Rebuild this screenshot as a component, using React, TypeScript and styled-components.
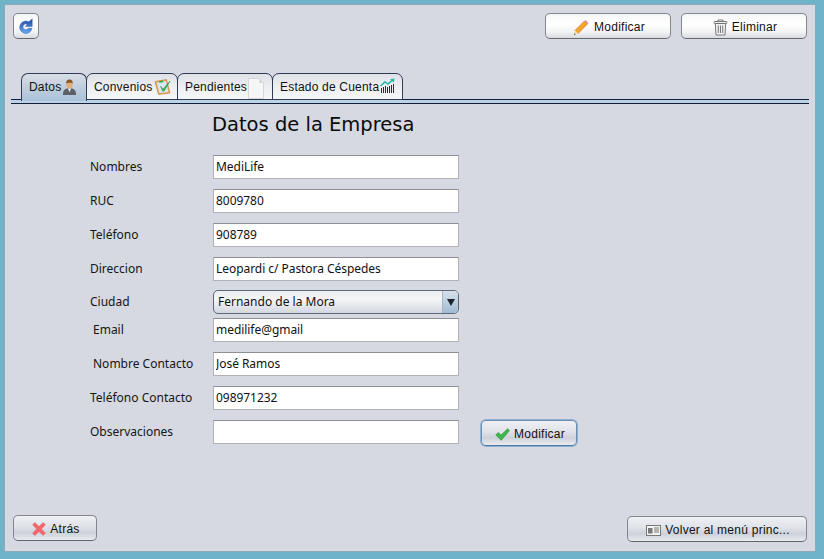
import React from "react";
import styled, { createGlobalStyle } from "styled-components";

const Global = createGlobalStyle`
  html, body { margin: 0; padding: 0; width: 824px; height: 559px; overflow: hidden; }
  * { box-sizing: border-box; }
`;

const Frame = styled.div`
  width: 824px; height: 559px; background: #6fb3c9;
  padding: 4px 8px 7px 4px;
  font-family: "Liberation Sans", Arial, sans-serif; color: #111;
`;
const Panel = styled.div`
  width: 100%; height: 100%; background: #d6d9e2; border: 1px solid #8fa9b8;
  padding: 8px 8px 10px 8px; display: flex; flex-direction: column;
`;
const Toolbar = styled.div`display: flex; align-items: flex-start; height: 26px; gap: 10px;`;
const Spacer = styled.div`flex: 1;`;
const Button = styled.button<{ $w: number; $tone?: "white" | "gray"; $focus?: boolean; $bare?: boolean }>`
  width: ${p => p.$w}px; height: 26px; padding: ${p => (p.$bare ? "0" : "2px 0 0 2px")}; flex: none;
  display: flex; align-items: center; justify-content: center; gap: 4px;
  border: 1px solid ${p => (p.$focus ? "#6f8fb0" : "#83868c")};
  border-bottom-color: ${p => (p.$focus ? "#4f79a3" : "#63666c")};
  border-radius: 5px;
  box-shadow: ${p => (p.$focus ? "0 0 0 1px #8fb2d4" : "none")};
  background: ${p => p.$tone === "gray"
    ? "linear-gradient(#eef0f4 0%, #dfe2e8 45%, #cdd1d9 70%, #e9ebef 100%)"
    : "linear-gradient(#f6f7f9 0%, #ffffff 45%, #f1f2f4 75%, #d9dbdf 100%)"};
  font-family: "Liberation Sans", Arial, sans-serif; font-size: 12px; letter-spacing: 0.25px; color: #111;
`;
const TabStrip = styled.div`
  display: flex; align-items: flex-end; height: 26px; margin: 34px 0 0 8px;
`;
const Tab = styled.div<{ $w: number; $active?: boolean }>`
  width: ${p => p.$w}px; height: ${p => (p.$active ? 28 : 27)}px; flex: none;
  margin-bottom: ${p => (p.$active ? -2 : -1)}px; margin-right: -1px;
  position: relative; z-index: ${p => (p.$active ? 2 : 1)};
  display: flex; align-items: flex-start; padding: 4px 0 0 7px; gap: 1px;
  border: 1px solid #2e3c56; border-bottom: ${p => (p.$active ? "none" : "1px solid #2e3c56")};
  border-radius: 7px 7px 0 0;
  background: ${p => p.$active
    ? "linear-gradient(#d9dfe7 0%, #c2d0de 45%, #a9c2d9 100%)"
    : "linear-gradient(#dfe1e7 0%, #eef0f3 60%, #f6f7f8 100%)"};
  font-size: 12px; letter-spacing: 0.2px; line-height: 18px; color: #111;
`;
const TabRule = styled.div`
  height: 5px; margin: 0 -2px 0 -2px; background: #bcd3e6;
  border-top: 1px solid #141f3c; border-bottom: 1px solid #141f3c;
`;
const Title = styled.h1`
  margin: 8px 0 0 199px; height: 26px; font: 400 19.5px/26px "DejaVu Sans", sans-serif; color: #0a0a0a;
`;
const Form = styled.div`display: flex; flex-direction: column; margin: 17px 0 0 0;`;
const Row = styled.div<{ $top: number }>`
  display: flex; align-items: center; height: 24px; margin-top: ${p => p.$top}px;
`;
const Label = styled.label<{ $indent?: boolean }>`
  width: 200px; flex: none; padding-left: ${p => (p.$indent ? 80 : 77)}px;
  font: 400 12px/16px "Noto Sans", sans-serif; letter-spacing: 0; color: #151515;
`;
const Field = styled.input`
  width: 246px; height: 24px; flex: none; padding: 0 2px 2px 2px; margin: 0;
  border: 1px solid #b0b2b6; border-top-color: #8d8f94; border-radius: 0; background: #fff; outline: none;
  font: 400 12px "Noto Sans", sans-serif; letter-spacing: -0.05px; color: #111;
`;
const Select = styled.div`
  width: 246px; height: 24px; flex: none; display: flex; align-items: center; justify-content: space-between;
  border: 1px solid #5d6878; border-radius: 5px; overflow: hidden;
  background: linear-gradient(#eceef2 0%, #f4f5f7 40%, #d2d7df 100%);
  font: 400 12px "Noto Sans", sans-serif; padding-left: 4px; padding-bottom: 1px; color: #111;
`;
const SelectArrow = styled.div`
  width: 16px; height: 24px; margin-bottom: -1px; display: flex; align-items: center; justify-content: center;
  background: linear-gradient(#d9e1ea 0%, #bccfe0 50%, #9fbad3 100%); border-left: 1px solid #a8b6c6;
`;
const SubmitSlot = styled.div`margin: 2px 0 0 22px;`;
const Footer = styled.div`
  margin-top: auto; display: flex; justify-content: space-between; align-items: flex-end; height: 27px;
`;
const FooterEnd = styled.div`display: flex; align-items: flex-end; margin-bottom: -1px;`;

const Refresh = () => (
  <svg width="20" height="20" viewBox="0 0 18 18">
    <defs><linearGradient id="rf" x1="0" y1="0" x2="0" y2="1"><stop offset="0" stopColor="#1c47a8" /><stop offset="1" stopColor="#6aa8ee" /></linearGradient></defs>
    <path d="M11.400 5.100A5.600 5.600 0 1 0 14.400 11h-3.400a2.500 2.500 0 1 1-.9-3.500L8.400 9.400h6.200V2.600z" fill="url(#rf)" stroke="#2a5cb0" strokeWidth=".4" />
  </svg>
);
const Pencil = () => (
  <svg width="17" height="17" viewBox="0 0 17 17">
    <path d="M2 11.500 11.500 2l3 3L5 14.500z" fill="#f7a52b" stroke="#c77a12" strokeWidth=".7" />
    <path d="M11.500 2l1-1 3 3-1 1z" fill="#d88bb2" />
    <path d="M2 11.500 1 16l4.500-1.500z" fill="#f3d9a8" />
    <path d="M1.400 14.300 1 16l1.700-.5z" fill="#444" />
  </svg>
);
const Trash = () => (
  <svg width="15" height="17" viewBox="0 0 15 17" fill="#efefef" stroke="#6d6d6d" strokeWidth=".9">
    <path d="M5 2.300V1h5v1.300" fill="none" />
    <rect x="1" y="2.500" width="13" height="2" rx=".8" />
    <path d="M2.300 4.500 3 16h9l.7-11.500z" />
    <path d="M5.300 6.500V14M7.500 6.500V14M9.700 6.500V14" fill="none" />
  </svg>
);
const Person = () => (
  <svg width="15" height="18" viewBox="0 0 16 18">
    <path d="M1 17.500c0-4.500 1.500-6.500 4.500-7h5c3 .5 4.500 2.500 4.500 7z" fill="#5d6066" />
    <path d="M6.300 10.500 8 14.500l1.700-4z" fill="#f0f0f0" />
    <ellipse cx="8" cy="6" rx="3.300" ry="4.500" fill="#e5ad78" />
    <path d="M4.600 5.500C4.200 2 6 1 8 1s3.800 1 3.400 4.500C10.500 4 6 4 4.600 5.500z" fill="#8f5522" />
  </svg>
);
const Clipboard = () => (
  <svg width="18" height="18" viewBox="0 0 18 18">
    <path d="M1 3.500 12.500 1.500 16 15 4.500 16.500z" fill="#e8a35a" stroke="#b7792f" strokeWidth=".6" />
    <path d="M2.700 4.400 11.800 3 14.500 14 5.400 15z" fill="#d7e6f5" />
    <path d="M5 3.200 9 2.500 9.300 4.200 5.300 4.800z" fill="#35a845" />
    <path d="M6.500 8.200l2.500 3 7-8.200-5.700 9.800-1.500.5z" fill="#3fb54f" stroke="#1f8a33" strokeWidth=".5" />
  </svg>
);
const Doc = () => (
  <svg width="16" height="21" viewBox="0 0 16 21">
    <path d="M.5.500H11L15.500 5v15.500H.5z" fill="#f6f6f6" stroke="#d4d6da" />
    <path d="M11 .500V5h4.500z" fill="#d8d8da" />
  </svg>
);
const Chart = () => (
  <svg width="15" height="16" viewBox="0 0 15 16">
    <path d="M1.500 15V10M3.500 15V9M5.500 15V8M7.500 15V9M9.500 15V8M11.500 15V7M13.500 15V6" stroke="#2c2c2c" strokeWidth="1" />
    <path d="M.5 8 5 4l3 2L12 2.500" fill="none" stroke="#1fb7a6" strokeWidth="1.500" />
    <path d="M10 1.200 14.500.5 13.800 4.500z" fill="#1fb7a6" />
  </svg>
);
const Check = () => (
  <svg width="15" height="13" viewBox="0 0 15 13">
    <path d="M.8 7 3.200 4.600 6 7.200 12.600.8 14.500 2.600 6.200 12.300z" fill="#3cb84a" stroke="#258c34" strokeWidth=".6" />
  </svg>
);
const Cross = () => (
  <svg width="14" height="14" viewBox="0 0 14 14">
    <path d="M2.800.6 7 4.600 11.200.6 13.400 2.800 9.400 7l4 4.200-2.200 2.200L7 9.400l-4.200 4-2.200-2.200 4-4.200-4-4.200z" fill="#f2666c" stroke="#e24b53" strokeWidth=".4" />
  </svg>
);
const IdCard = () => (
  <svg width="15" height="11" viewBox="0 0 15 11">
    <rect x=".5" y=".5" width="14" height="10" fill="#f3f3f3" stroke="#777" />
    <rect x="2" y="3" width="4.500" height="5.500" fill="#777" />
    <path d="M8 3h5M8 5h5M8 7h5" stroke="#777" />
  </svg>
);
const Caret = () => (
  <svg width="8" height="7" viewBox="0 0 8 7"><path d="M0 0h8L4 7z" fill="#1e2430" /></svg>
);

const rows = [
  { top: 0, label: "Nombres", value: "MediLife" },
  { top: 10, label: "RUC", value: "8009780" },
  { top: 10, label: "Teléfono", value: "908789" },
  { top: 10, label: "Direccion", value: "Leopardi c/ Pastora Céspedes" },
];
const rowsAfter = [
  { top: 4, label: "Email", value: "medilife@gmail", indent: true },
  { top: 10, label: "Nombre Contacto", value: "José Ramos", indent: true },
  { top: 10, label: "Teléfono Contacto", value: "098971232" },
];

export default function App() {
  return (
    <Frame>
      <Global />
      <Panel>
        <Toolbar>
          <Button $w={26} $bare aria-label="Actualizar"><Refresh /></Button>
          <Spacer />
          <Button $w={126}><Pencil />Modificar</Button>
          <Button $w={126}><Trash />Eliminar</Button>
        </Toolbar>
        <TabStrip>
          <Tab $w={66} $active>Datos<Person /></Tab>
          <Tab $w={92}>Convenios<Clipboard /></Tab>
          <Tab $w={96}>Pendientes<Doc /></Tab>
          <Tab $w={131}>Estado de Cuenta<Chart /></Tab>
        </TabStrip>
        <TabRule />
        <Title>Datos de la Empresa</Title>
        <Form>
          {rows.map(r => (
            <Row key={r.label} $top={r.top}>
              <Label>{r.label}</Label>
              <Field readOnly defaultValue={r.value} />
            </Row>
          ))}
          <Row $top={9}>
            <Label>Ciudad</Label>
            <Select>Fernando de la Mora<SelectArrow><Caret /></SelectArrow></Select>
          </Row>
          {rowsAfter.map(r => (
            <Row key={r.label} $top={r.top}>
              <Label $indent={r.indent}>{r.label}</Label>
              <Field readOnly defaultValue={r.value} />
            </Row>
          ))}
          <Row $top={10}>
            <Label>Observaciones</Label>
            <Field readOnly defaultValue="" />
            <SubmitSlot><Button $w={96} $tone="gray" $focus><Check />Modificar</Button></SubmitSlot>
          </Row>
        </Form>
        <Footer>
          <Button $w={84} $tone="gray"><Cross />Atrás</Button>
          <FooterEnd><Button $w={180} $tone="gray"><IdCard />Volver al menú princ...</Button></FooterEnd>
        </Footer>
      </Panel>
    </Frame>
  );
}
